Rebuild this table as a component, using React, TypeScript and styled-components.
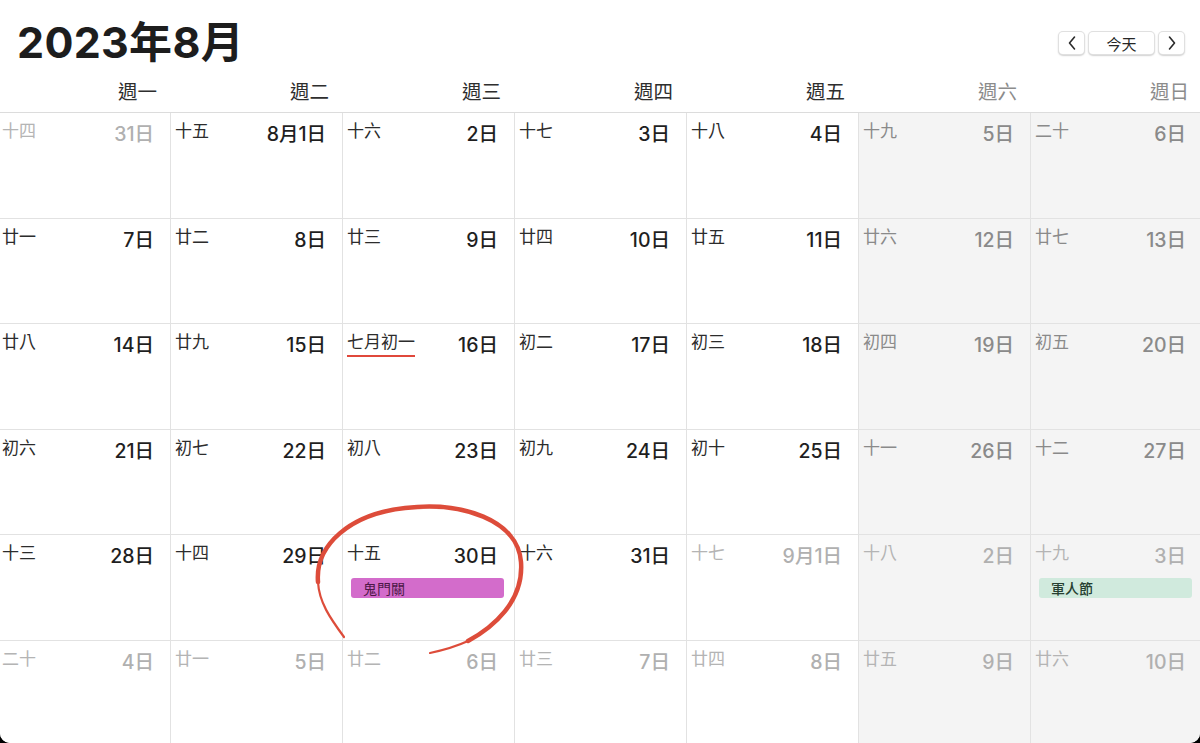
import React from 'react';
import styled, { createGlobalStyle } from 'styled-components';

const GlobalStyle = createGlobalStyle`
	html, body {
		margin: 0;
		padding: 0;
		background: #000;
	}
	body {
		font-family: Inter, 'Noto Sans CJK TC', sans-serif;
		-webkit-font-smoothing: antialiased;
	}
`;

type Tone = 'normal' | 'weekend' | 'out' | 'outWeekend';

type Day = {
	lunar: string;
	date: string;
	tone: Tone;
	mark?: boolean;
	event?: { label: string; kind: 'ghost' | 'army' };
};

const WEEKDAYS = ['週一', '週二', '週三', '週四', '週五', '週六', '週日'];

const LUNAR = [
	['十四', '十五', '十六', '十七', '十八', '十九', '二十'],
	['廿一', '廿二', '廿三', '廿四', '廿五', '廿六', '廿七'],
	['廿八', '廿九', '七月初一', '初二', '初三', '初四', '初五'],
	['初六', '初七', '初八', '初九', '初十', '十一', '十二'],
	['十三', '十四', '十五', '十六', '十七', '十八', '十九'],
	['二十', '廿一', '廿二', '廿三', '廿四', '廿五', '廿六'],
];

const buildDays = (): Day[] => {
	const days: Day[] = [];
	// grid starts on Monday 31 July 2023
	for (let i = 0; i < 42; i++) {
		const row = Math.floor(i / 7);
		const col = i % 7;
		const weekend = col >= 5;
		let date: string;
		let inMonth = true;
		if (i === 0) {
			date = '31日';
			inMonth = false;
		} else if (i <= 31) {
			date = i === 1 ? '8月1日' : `${i}日`;
		} else {
			const n = i - 31;
			date = n === 1 ? '9月1日' : `${n}日`;
			inMonth = false;
		}
		const tone: Tone = inMonth ? (weekend ? 'weekend' : 'normal') : weekend ? 'outWeekend' : 'out';
		const day: Day = { lunar: LUNAR[row][col], date, tone };
		if (i === 16) day.mark = true;
		if (i === 30) day.event = { label: '鬼門關', kind: 'ghost' };
		if (i === 34) day.event = { label: '軍人節', kind: 'army' };
		days.push(day);
	}
	return days;
};

const ChevronLeft = () => (
	<svg width="10" height="16" viewBox="0 0 10 16" fill="none">
		<path d="M7.5 2 L2.5 8 L7.5 14" stroke="#2a2a2a" strokeWidth="1.6" strokeLinecap="round" strokeLinejoin="round" />
	</svg>
);

const ChevronRight = () => (
	<svg width="10" height="16" viewBox="0 0 10 16" fill="none">
		<path d="M2.5 2 L7.5 8 L2.5 14" stroke="#2a2a2a" strokeWidth="1.6" strokeLinecap="round" strokeLinejoin="round" />
	</svg>
);

const Scribble = () => (
	<ScribbleSvg width="1200" height="743" viewBox="0 0 1200 743">
		<path d="M344 637 C330 618 319 602 318 582" stroke="#dd4c3a" strokeWidth="2.2" fill="none" strokeLinecap="round" />
		<path
			d="M318 582 C315 545 350 514 405 508 C462 501 518 520 521 562 C524 602 492 628 468 641"
			stroke="#dd4c3a"
			strokeWidth="4.5"
			fill="none"
			strokeLinecap="round"
		/>
		<path d="M468 641 C455 647 444 650 430 653" stroke="#dd4c3a" strokeWidth="2.2" fill="none" strokeLinecap="round" />
	</ScribbleSvg>
);

const App = () => {
	const days = buildDays();

	return (
		<>
			<GlobalStyle />
			<Window>
				<TopBar>
					<Title>2023年8月</Title>
					<NavGroup>
						<NavButton aria-label="上一個月">
							<ChevronLeft />
						</NavButton>
						<TodayButton>今天</TodayButton>
						<NavButton aria-label="下一個月">
							<ChevronRight />
						</NavButton>
					</NavGroup>
				</TopBar>
				<WeekHeader>
					{WEEKDAYS.map((w, i) => (
						<WeekdayLabel key={w} $weekend={i >= 5}>
							{w}
						</WeekdayLabel>
					))}
				</WeekHeader>
				<MonthGrid>
					{days.map((d, i) => (
						<Cell key={i} $shaded={i % 7 >= 5}>
							<CellHead>
								<Lunar $tone={d.tone} $mark={d.mark}>
									{d.lunar}
								</Lunar>
								<DateNum $tone={d.tone}>{d.date}</DateNum>
							</CellHead>
							{d.event && <EventBar $kind={d.event.kind}>{d.event.label}</EventBar>}
						</Cell>
					))}
				</MonthGrid>
				<Scribble />
			</Window>
		</>
	);
};

const Window = styled.div`
	position: relative;
	width: 1200px;
	height: 743px;
	overflow: hidden;
	background: #fff;
	border-radius: 0 0 10px 10px;
`;

const TopBar = styled.div`
	display: flex;
	align-items: flex-start;
	justify-content: space-between;
	height: 70px;
	padding: 0 15px 0 17px;
	box-sizing: border-box;
`;

const Title = styled.h1`
	margin: 15px 0 0;
	font-family: Inter, 'Noto Sans CJK TC', sans-serif;
	font-size: 43px;
	line-height: 54px;
	font-weight: 700;
	color: #1d1d1d;
	letter-spacing: 0.3px;
`;

const NavGroup = styled.div`
	display: flex;
	gap: 3px;
	margin-top: 31px;
`;

const NavButton = styled.button`
	display: flex;
	align-items: center;
	justify-content: center;
	width: 27px;
	height: 24px;
	padding: 0;
	background: #fff;
	border: 0.5px solid rgba(0, 0, 0, 0.12);
	border-radius: 5px;
	box-shadow: 0 1px 1.5px rgba(0, 0, 0, 0.18);
`;

const TodayButton = styled(NavButton)`
	width: 67px;
	font-family: 'Noto Sans CJK TC', sans-serif;
	font-size: 15px;
	color: #262626;
`;

const WeekHeader = styled.div`
	display: grid;
	grid-template-columns: repeat(7, 172px);
	margin-left: -2px;
	height: 42px;
	border-bottom: 1.5px solid #dcdcdc;
`;

const WeekdayLabel = styled.div<{ $weekend: boolean }>`
	padding-right: 13px;
	text-align: right;
	font-family: 'Noto Sans CJK TC', sans-serif;
	font-size: 19.5px;
	line-height: 42px;
	color: ${(p) => (p.$weekend ? '#8c8c8c' : '#2e2e2e')};
`;

const MonthGrid = styled.div`
	display: grid;
	grid-template-columns: repeat(7, 172px);
	grid-auto-rows: 105.5px;
	margin-left: -2px;
`;

const Cell = styled.div<{ $shaded: boolean }>`
	display: flex;
	flex-direction: column;
	padding: 6px 16px 0 4px;
	box-sizing: border-box;
	background: ${(p) => (p.$shaded ? '#f4f4f4' : '#fff')};
	border-left: 1px solid #e2e2e2;
	border-bottom: 1px solid #e2e2e2;
	&:nth-child(7n + 1) {
		border-left: none;
	}
`;

const CellHead = styled.div`
	display: flex;
	justify-content: space-between;
	align-items: flex-start;
`;

const lunarColor: Record<Tone, string> = {
	normal: '#2c2c2c',
	weekend: '#8a8a8a',
	out: '#b4b4b4',
	outWeekend: '#b4b4b4',
};

const dateColor: Record<Tone, string> = {
	normal: '#1f1f1f',
	weekend: '#8a8a8a',
	out: '#b0b0b0',
	outWeekend: '#b0b0b0',
};

const Lunar = styled.span<{ $tone: Tone; $mark?: boolean }>`
	font-family: 'Noto Sans CJK TC', sans-serif;
	font-size: 17px;
	line-height: 22px;
	color: ${(p) => lunarColor[p.$tone]};
	padding-bottom: ${(p) => (p.$mark ? '3px' : '0')};
	border-bottom: ${(p) => (p.$mark ? '2px solid #e0483b' : 'none')};
`;

const DateNum = styled.span<{ $tone: Tone }>`
	margin-top: 3px;
	font-family: Inter, 'Noto Sans CJK TC', sans-serif;
	font-size: 19.5px;
	line-height: 24px;
	font-weight: 500;
	color: ${(p) => dateColor[p.$tone]};
`;

const EventBar = styled.div<{ $kind: 'ghost' | 'army' }>`
	margin: 10px -6px 0 4px;
	height: 20px;
	padding-left: 12px;
	border-radius: 3px;
	font-family: 'Noto Sans CJK TC', sans-serif;
	font-size: 14px;
	line-height: 20px;
	font-weight: ${(p) => (p.$kind === 'ghost' ? 400 : 500)};
	background: ${(p) => (p.$kind === 'ghost' ? '#d36ccb' : '#d0eadd')};
	color: ${(p) => (p.$kind === 'ghost' ? '#4d1848' : '#263f31')};
`;

const ScribbleSvg = styled.svg`
	position: absolute;
	top: 0;
	left: 0;
	pointer-events: none;
`;

export default App;
